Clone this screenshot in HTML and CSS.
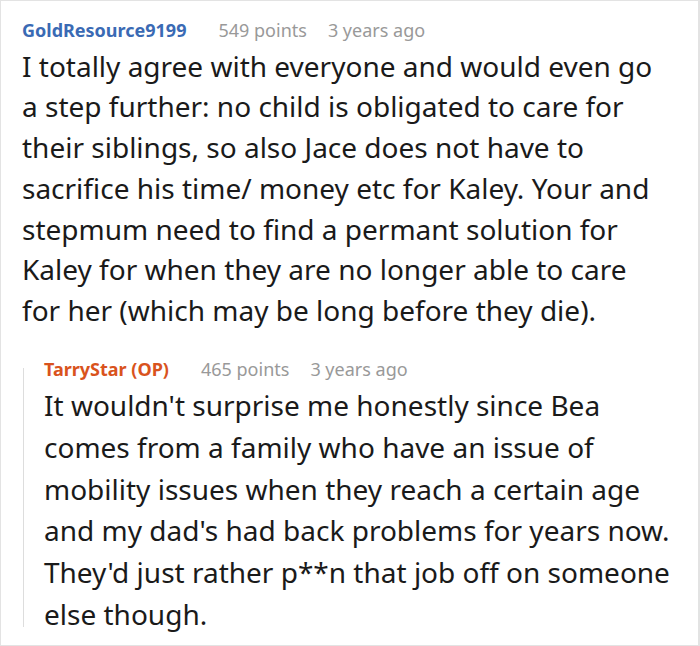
FILE: index.html
```html
<!DOCTYPE html>
<html lang="en">
<head>
<meta charset="utf-8">
<link rel="stylesheet" href="styles.css">
</head>
<body>
<div class="frame">
  <div class="comment">
    <div class="head">
      <span class="author author-blue">GoldResource9199</span>
      <span class="meta points">549 points</span>
      <span class="meta">3 years ago</span>
    </div>
    <p class="text">I totally agree with everyone and would even go a step further: no child is obligated to care for their siblings, so also Jace does not have to sacrifice his time/ money etc for Kaley. Your and stepmum need to find a permant solution for Kaley for when they are no longer able to care for her (which may be long before they die).</p>
  </div>
  <div class="reply">
    <div class="rail"></div>
    <div class="comment reply-body">
      <div class="head">
        <span class="author author-op">TarryStar (OP)</span>
        <span class="meta points">465 points</span>
        <span class="meta">3 years ago</span>
      </div>
      <p class="text">It wouldn't surprise me honestly since Bea comes from a family who have an issue of mobility issues when they reach a certain age and my dad's had back problems for years now. They'd just rather p**n that job off on someone else though.</p>
    </div>
  </div>
</div>
</body>
</html>
```
FILE: styles.css
```css
html, body {
  margin: 0;
  padding: 0;
  background: #ffffff;
}
.frame {
  box-sizing: border-box;
  width: 700px;
  height: 646px;
  border: 1px solid #e3e3e3;
  border-right-width: 2px;
  padding: 17px 27px 0 21px;
  font-family: "Noto Sans", "Open Sans", sans-serif;
  color: #1a1a1a;
  overflow: hidden;
}
.head {
  display: flex;
  align-items: baseline;
  font-size: 18px;
  line-height: 24px;
  white-space: nowrap;
}
.author {
  font-weight: 700;
  margin-right: 32px;
}
.author-blue { color: #3a6ab4; }
.author-op { color: #d9531d; }
.meta {
  color: #999999;
}
.points {
  margin-right: 21px;
}
.text {
  margin: 3.5px 0 0 0;
  font-size: 28px;
  line-height: 40.8px;
  color: #1a1a1a;
}
.reply {
  display: flex;
  margin-top: 26px;
}
.rail {
  flex: 0 0 1px;
  background: #dddddd;
  margin: 11px 20px 8.5px 1px;
}
.reply-body {
  flex: 1;
}
.reply-body .text {
  margin-top: 4.3px;
  line-height: 41.7px;
}
```
